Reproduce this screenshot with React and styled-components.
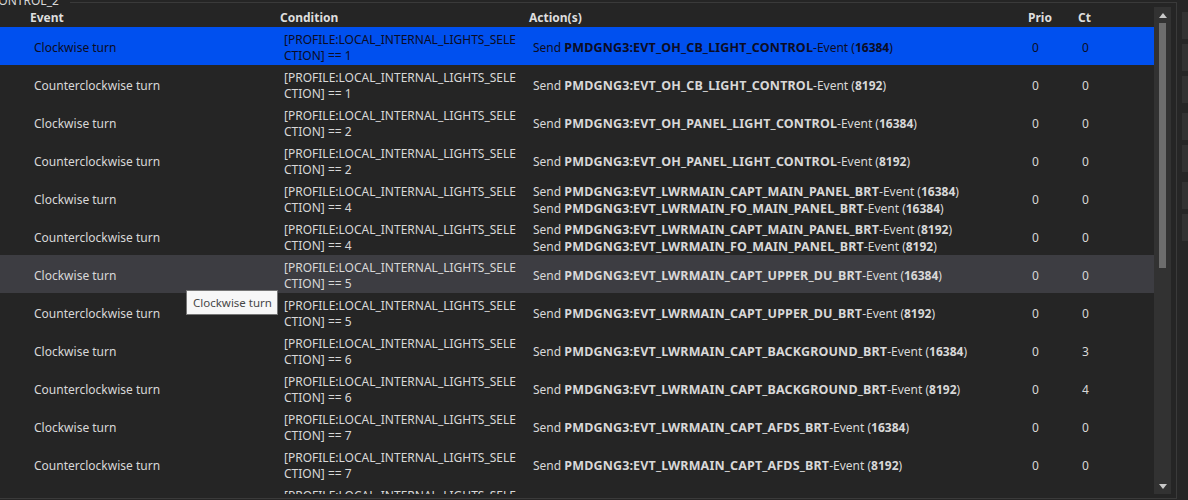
import React from "react";
import styled, { createGlobalStyle } from "styled-components";

const Global = createGlobalStyle`
  html, body { margin: 0; padding: 0; background: #252525; }
  body { font-family: "Noto Sans", "Open Sans", sans-serif; overflow: hidden; }
`;

const Page = styled.div`
  display: flex;
  width: 1188px;
  height: 500px;
  overflow: hidden;
  background: #252525;
`;

const Group = styled.div`
  position: relative;
  margin-top: 2px;
  width: 1176px;
  height: 495px;
  border-top: 1px solid #3a3a3a;
  border-right: 1px solid #3a3a3a;
  border-bottom: 1px solid #3a3a3a;
  display: flex;
  flex-direction: column;
`;

const Legend = styled.div`
  position: absolute;
  left: -17px;
  top: -10px;
  padding: 0 11px 0 8px;
  background: #252525;
  color: #d8d8d8;
  font-size: 12px;
  line-height: 16px;
  white-space: nowrap;
`;

const ListArea = styled.div`
  margin-top: 4px;
  display: flex;
  height: 487px;
  width: 1171px;
`;

const List = styled.div`
  flex: 1;
  display: flex;
  flex-direction: column;
  overflow: hidden;
`;

const cols = "26px 250px 249px 499px 50px 80px";

const HeaderRow = styled.div`
  display: grid;
  grid-template-columns: ${cols};
  height: 20px;
  align-items: center;
  flex-shrink: 0;
`;

const HeaderCell = styled.div`
  padding-left: 4px;
  font-weight: 700;
  font-size: 12px;
  color: #dedede;
`;

const Row = styled.div`
  box-sizing: border-box;
  display: grid;
  grid-template-columns: ${cols};
  height: 38px;
  padding-top: 3px;
  flex-shrink: 0;
  align-items: center;
  background: ${(p) => (p.$state === "sel" ? "#0050ef" : p.$state === "hover" ? "#3d3d42" : "transparent")};
  color: ${(p) => (p.$state === "sel" ? "#0c0c24" : "#d8d8d8")};
  font-size: 12px;
  line-height: 16px;
`;

const Cell = styled.div`
  padding-left: 8px;
  white-space: nowrap;
`;

const ActionCell = styled(Cell)`
  line-height: 17px;
`;

const Line = styled.div``;

const Name = styled.b`
  font-weight: 700;
  font-size: 12.5px;
  letter-spacing: 0.15px;
`;

const Num = styled.b`
  font-weight: 700;
`;

const Scrollbar = styled.div`
  width: 17px;
  background: #323232;
  display: flex;
  flex-direction: column;
  align-items: center;
`;

const Arrow = styled.div`
  height: 16px;
  display: flex;
  align-items: center;
  justify-content: center;
`;

const Track = styled.div`
  flex: 1;
  width: 7px;
`;

const Thumb = styled.div`
  width: 7px;
  height: 245px;
  background: #6d6d6d;
`;

const Side = styled.div`
  flex: 1;
  display: flex;
  flex-direction: column;
  padding: 12px 0 0 5px;
  gap: 5px;
  background: #262626;
`;

const SideBtn = styled.div`
  height: 27px;
  background: #323232;
  margin-top: ${(p) => p.$mt || 0}px;
`;

const Tooltip = styled.div`
  position: absolute;
  left: 186px;
  top: 287px;
  box-sizing: border-box;
  height: 25px;
  padding: 0 5px 0 6px;
  background: #f7f7f7;
  border: 1px solid #767676;
  color: #474747;
  font-size: 11.5px;
  display: flex;
  align-items: center;
  white-space: nowrap;
`;

const PRE = "[PROFILE:LOCAL_INTERNAL_LIGHTS_SELE";

const rows = [
  { cw: true, n: 1, acts: ["EVT_OH_CB_LIGHT_CONTROL"], ct: 0, state: "sel" },
  { cw: false, n: 1, acts: ["EVT_OH_CB_LIGHT_CONTROL"], ct: 0 },
  { cw: true, n: 2, acts: ["EVT_OH_PANEL_LIGHT_CONTROL"], ct: 0 },
  { cw: false, n: 2, acts: ["EVT_OH_PANEL_LIGHT_CONTROL"], ct: 0 },
  { cw: true, n: 4, acts: ["EVT_LWRMAIN_CAPT_MAIN_PANEL_BRT", "EVT_LWRMAIN_FO_MAIN_PANEL_BRT"], ct: 0 },
  { cw: false, n: 4, acts: ["EVT_LWRMAIN_CAPT_MAIN_PANEL_BRT", "EVT_LWRMAIN_FO_MAIN_PANEL_BRT"], ct: 0 },
  { cw: true, n: 5, acts: ["EVT_LWRMAIN_CAPT_UPPER_DU_BRT"], ct: 0, state: "hover" },
  { cw: false, n: 5, acts: ["EVT_LWRMAIN_CAPT_UPPER_DU_BRT"], ct: 0 },
  { cw: true, n: 6, acts: ["EVT_LWRMAIN_CAPT_BACKGROUND_BRT"], ct: 3 },
  { cw: false, n: 6, acts: ["EVT_LWRMAIN_CAPT_BACKGROUND_BRT"], ct: 4 },
  { cw: true, n: 7, acts: ["EVT_LWRMAIN_CAPT_AFDS_BRT"], ct: 0 },
  { cw: false, n: 7, acts: ["EVT_LWRMAIN_CAPT_AFDS_BRT"], ct: 0 },
  { cw: true, n: 8, acts: ["EVT_LWRMAIN_CAPT_OUTBD_DU_BRT"], ct: 0 },
];

export default function App() {
  return (
    <Page>
      <Global />
      <Group>
        <Legend>CONTROL_2</Legend>
        <ListArea>
          <List>
            <HeaderRow>
              <div />
              <HeaderCell>Event</HeaderCell>
              <HeaderCell>Condition</HeaderCell>
              <HeaderCell>Action(s)</HeaderCell>
              <HeaderCell>Prio</HeaderCell>
              <HeaderCell>Ct</HeaderCell>
            </HeaderRow>
            {rows.map((r, i) => (
              <Row key={i} $state={r.state}>
                <div />
                <Cell>{r.cw ? "Clockwise turn" : "Counterclockwise turn"}</Cell>
                <Cell>
                  <Line>{PRE}</Line>
                  <Line>CTION] == {r.n}</Line>
                </Cell>
                <ActionCell>
                  {r.acts.map((a, j) => (
                    <Line key={j}>
                      Send <Name>PMDGNG3:{a}</Name>-Event (<Num>{r.cw ? "16384" : "8192"}</Num>)
                    </Line>
                  ))}
                </ActionCell>
                <Cell>0</Cell>
                <Cell>{r.ct}</Cell>
              </Row>
            ))}
          </List>
          <Scrollbar>
            <Arrow>
              <svg width="8" height="5" viewBox="0 0 8 5"><path d="M0 5 L4 0 L8 5 Z" fill="#c8c8c8" /></svg>
            </Arrow>
            <Track>
              <Thumb />
            </Track>
            <Arrow>
              <svg width="8" height="5" viewBox="0 0 8 5"><path d="M0 0 L4 5 L8 0 Z" fill="#c8c8c8" /></svg>
            </Arrow>
          </Scrollbar>
        </ListArea>
        <Tooltip>Clockwise turn</Tooltip>
      </Group>
      <Side>
        <SideBtn />
        <SideBtn />
        <SideBtn />
        <SideBtn $mt={5} />
        <SideBtn />
        <SideBtn $mt={5} />
        <SideBtn />
      </Side>
    </Page>
  );
}
